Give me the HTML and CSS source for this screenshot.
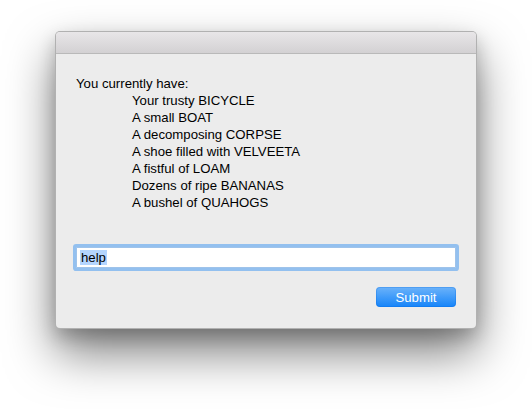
FILE: index.html
```html
<!DOCTYPE html>
<html>
<head>
<meta charset="utf-8">
<link rel="stylesheet" href="styles.css">
</head>
<body>
<div class="window">
  <div class="titlebar"></div>
  <div class="content">
    <div class="inventory">
      <div class="heading">You currently have:</div>
      <ul class="items">
        <li>Your trusty BICYCLE</li>
        <li>A small BOAT</li>
        <li>A decomposing CORPSE</li>
        <li>A shoe filled with VELVEETA</li>
        <li>A fistful of LOAM</li>
        <li>Dozens of ripe BANANAS</li>
        <li>A bushel of QUAHOGS</li>
      </ul>
    </div>
    <div class="field"><span class="sel">help</span></div>
    <div class="actions"><button class="submit">Submit</button></div>
  </div>
</div>
</body>
</html>
```
FILE: styles.css
```css
html, body {
  margin: 0;
  padding: 0;
  background: #ffffff;
}
body {
  box-sizing: border-box;
  min-height: 409px;
  padding: 31px 0 81px 55px;
  font-family: "Liberation Sans", Arial, sans-serif;
  font-size: 13.2px;
  color: #000;
}
.window {
  width: 420px;
  border: 1px solid rgba(0,0,0,0.25);
  border-radius: 5px;
  background: #ececec;
  box-shadow: 0 24px 48px rgba(0,0,0,0.5), 0 8px 18px rgba(0,0,0,0.2);
  overflow: hidden;
}
.titlebar {
  height: 21px;
  background: linear-gradient(#e8e6e8, #d3d1d3);
  border-bottom: 1px solid #b9b9b9;
}
.content {
  padding: 21px 20px 21px 20px;
}
.inventory {
  line-height: 17px;
}
.items {
  list-style: none;
  margin: 0;
  padding: 0 0 0 56px;
}
.field {
  margin-top: 36px;
  height: 19px;
  background: #fff;
  border: 1px solid #9fc3ea;
  box-shadow: 0 0 0 3px #93c0ef;
  border-radius: 1px;
  line-height: 19px;
  padding-left: 3px;
}
.sel {
  background: #b4d5fe;
  display: inline-block;
  line-height: 15px;
  padding: 0 1px;
}
.actions {
  display: flex;
  justify-content: flex-end;
  margin-top: 19px;
}
.submit {
  width: 80px;
  height: 20px;
  border: none;
  border-radius: 4px;
  background: linear-gradient(#6cb3fa, #1584f9);
  box-shadow: inset 0 0 0 1px rgba(0,100,220,0.25);
  color: #fff;
  font-family: "Liberation Sans", Arial, sans-serif;
  font-size: 13.2px;
  padding: 0;
}
```
